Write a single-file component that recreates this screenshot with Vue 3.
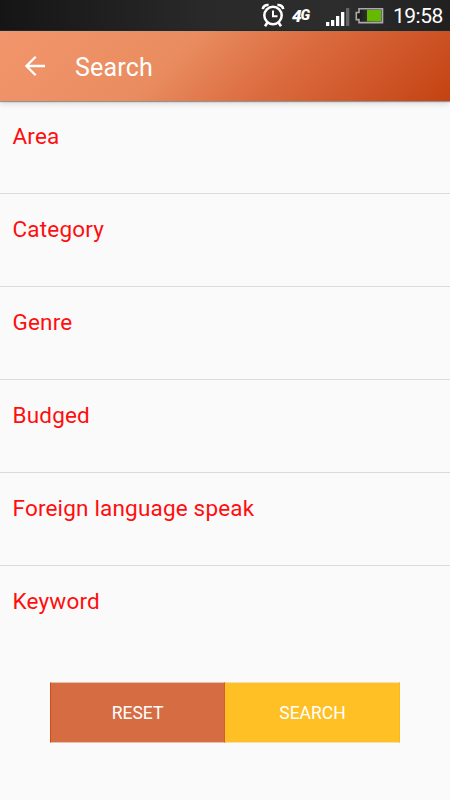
<script setup>
const fields = ['Area', 'Category', 'Genre', 'Budged', 'Foreign language speak', 'Keyword']
</script>

<template>
  <div class="screen">
    <header class="status">
      <svg class="alarm" width="24" height="26" viewBox="0 0 24 26" fill="none" stroke="#fff">
        <circle cx="12" cy="13.5" r="8.7" stroke-width="2.5" />
        <path d="M12 8.5v5.8h4.5" stroke-width="2" />
        <path d="M1.8 7.2C2 4.4 4.6 2.6 7.6 3M22.2 7.2C22 4.4 19.4 2.6 16.4 3" stroke-width="2.6" />
        <path d="M6.5 20.5 4 24.2M17.5 20.5l2.5 3.7" stroke-width="2.6" />
      </svg>
      <span class="network"><b class="four">4</b><b class="g">G</b></span>
      <svg class="signal" width="24" height="20" viewBox="0 0 24 20" fill="#fff">
        <path d="M0 15h3.3v4H0zM5 13h3.3v6H5zM10 9h3.3v10H10zM15 5h3.3v14H15z" />
        <path d="M20 1h3.3v18H20z" fill="#666" />
      </svg>
      <svg class="battery" width="30" height="18" viewBox="0 0 30 18">
        <defs>
          <linearGradient id="cell"><stop offset="0" stop-color="#151515" /><stop offset="1" stop-color="#555" /></linearGradient>
        </defs>
        <path d="M4 1.8h23.5v13.8H4v-3H1.3V5.5H4z" fill="url(#cell)" stroke="#aaa" stroke-width="1.6" />
        <path d="M12 3H26V14.3H12z" fill="#65ba00" />
      </svg>
      <time class="time">19:58</time>
    </header>
    <nav class="toolbar">
      <svg class="back" width="22" height="22" viewBox="0 0 22 22" fill="none" stroke="#fff" stroke-width="2.3">
        <path d="M11.7 1.7 2.4 11l9.3 9.3M2.2 11H21" />
      </svg>
      <h1 class="title">Search</h1>
    </nav>
    <main class="form">
      <section v-for="field in fields" :key="field" class="field">{{ field }}</section>
      <div class="actions">
        <button class="btn reset">RESET</button>
        <button class="btn search">SEARCH</button>
      </div>
    </main>
  </div>
</template>

<style>
body { margin: 0; background: #fafafa; }
</style>

<style scoped>
.screen {
  width: 450px;
  height: 800px;
  overflow: hidden;
  background: #fafafa;
  font-family: Roboto, sans-serif;
  display: flex;
  flex-direction: column;
}
.status {
  box-sizing: border-box;
  height: 31px;
  flex: none;
  display: flex;
  align-items: flex-start;
  padding-left: 261px;
  background: linear-gradient(90deg, #151515, #292929 45%, #2d2d2d 75%, #202020);
  border-bottom: 1px solid #0b3036;
  color: #fff;
}
.alarm { margin-top: 2px; }
.network {
  width: 20px;
  margin: 8px 0 0 7px;
  line-height: 16px;
  font-style: italic;
  display: flex;
  white-space: nowrap;
}
.four { font-size: 17px; font-weight: 900; }
.g { font-size: 14.5px; font-weight: 900; margin: 0 0 0 -1px; }
.signal { margin: 7px 0 0 14px; }
.battery { margin: 7px 0 0 5px; }
.time {
  margin-left: 8px;
  margin-top: 3px;
  font-size: 21px;
  line-height: 27px;
  letter-spacing: -0.5px;
  white-space: nowrap;
}
.toolbar {
  box-sizing: border-box;
  height: 70px;
  flex: none;
  display: flex;
  align-items: center;
  padding-left: 24px;
  background: linear-gradient(135deg, #f2956c, #e98d60 38%, #dc6e42 60%, #c44212);
  box-shadow: 0 1px 1px rgba(0, 0, 0, 0.35), 0 3px 6px rgba(0, 0, 0, 0.13);
  color: #fff;
}
.title {
  margin: 3px 0 0 29px;
  font-size: 25px;
  line-height: 30px;
  font-weight: 400;
  letter-spacing: 0.2px;
}
.field {
  box-sizing: border-box;
  height: 93px;
  padding: 21px 12.5px 0;
  font-size: 22.5px;
  line-height: 28px;
  letter-spacing: 0.18px;
  color: #ff0e0e;
  border-bottom: 1px solid #dadada;
}
.field:nth-child(6) { border-color: transparent; }
.actions {
  display: flex;
  margin: 23px 50px 0;
}
.btn {
  box-sizing: border-box;
  width: 175px;
  height: 61px;
  padding: 0;
  border: 1px solid;
  font: 400 17.5px/20px Roboto, sans-serif;
  color: #fff;
}
.reset { background: #d66c42; border-color: #e8c0b0 #d2602f #e8c0b0 #ce4d15; }
.search { background: #ffc026; border-color: #f5dfae #fcb815 #f5dfae #ffc026; }
</style>
